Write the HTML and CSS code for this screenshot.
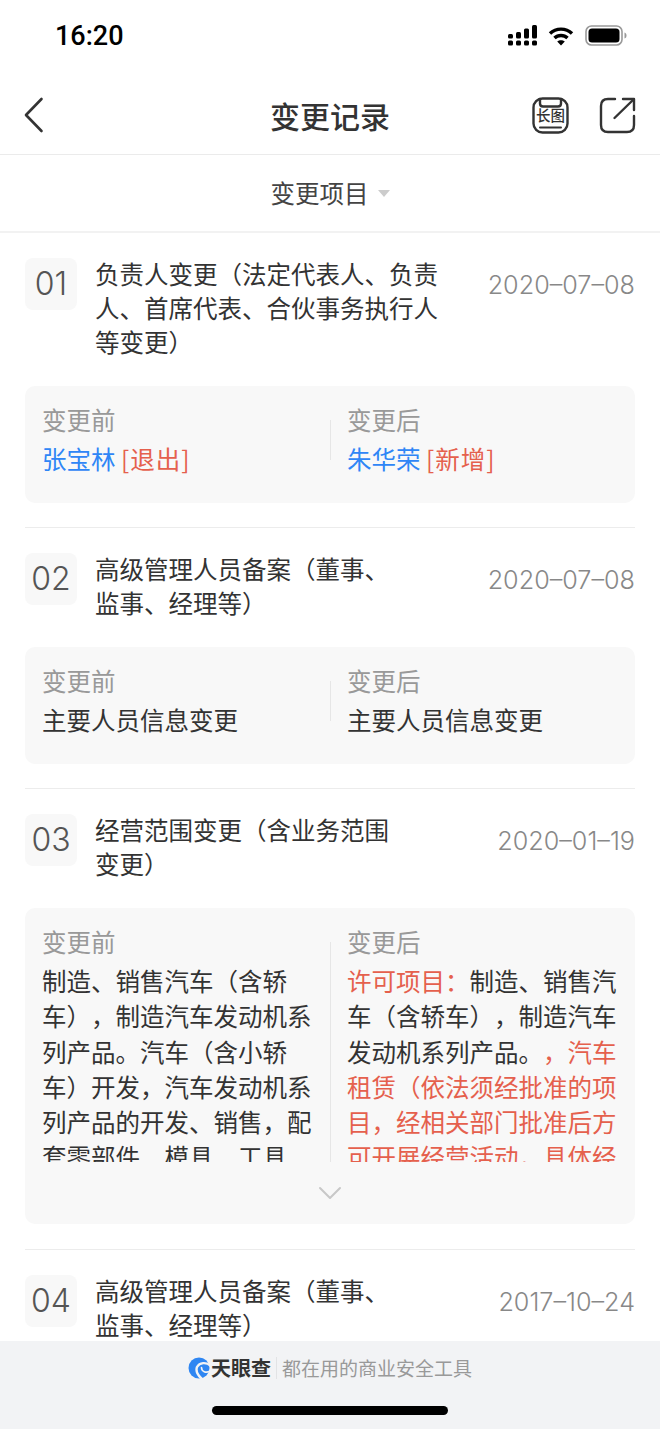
FILE: index.html
```html
<!DOCTYPE html>
<html lang="zh-CN">
<head>
    <meta charset="UTF-8">
    <meta name="viewport" content="width=device-width, initial-scale=1.0">
    <title>变更记录</title>
    <link rel="stylesheet" href="styles.css">
</head>
<body>
    <div class="page">
        <div class="status-bar">
            <span class="time">16:20</span>
            <div class="status-icons">
                <svg class="signal" width="29" height="21" viewBox="0 0 29 21" fill="#000">
                    <rect x="0" y="9" width="5" height="4.5" rx="1.5"/>
                    <rect x="0" y="15.5" width="5" height="5" rx="1.5"/>
                    <rect x="8" y="7" width="5" height="6.5" rx="1.5"/>
                    <rect x="8" y="15.5" width="5" height="5" rx="1.5"/>
                    <rect x="16" y="3.5" width="5" height="10" rx="1.5"/>
                    <rect x="16" y="15.5" width="5" height="5" rx="1.5"/>
                    <rect x="24" y="0" width="5" height="13.5" rx="1.5"/>
                    <rect x="24" y="15.5" width="5" height="5" rx="1.5"/>
                </svg>
                <svg class="wifi" width="26" height="20" viewBox="0 0 26 20" fill="none" stroke="#000" stroke-width="3.4">
                    <path d="M2 7.5C8 1.6 18 1.6 24 7.5"/>
                    <path d="M6.5 12C10 8.6 16 8.6 19.5 12"/>
                    <path d="M13 19.5L9.2 15.6C11.3 13.7 14.7 13.7 16.8 15.6Z" fill="#000" stroke="none"/>
                </svg>
                <svg class="battery" width="42" height="21" viewBox="0 0 42 21">
                    <rect x="1" y="1" width="36" height="19" rx="5.5" fill="none" stroke="#999" stroke-width="1.6"/>
                    <rect x="3.5" y="3.5" width="31" height="14" rx="3.5" fill="#000"/>
                    <path d="M39.5 7.5C41 8 41.5 9 41.5 10.500S41 13 39.5 13.500Z" fill="#999"/>
                </svg>
            </div>
        </div>

        <div class="nav">
            <svg class="back" width="20" height="36" viewBox="0 0 20 36" fill="none" stroke="#333" stroke-width="2.6" stroke-linecap="round" stroke-linejoin="round">
                <path d="M17.500 2L2 18L17.500 34"/>
            </svg>
            <h1 class="nav-title">变更记录</h1>
            <div class="nav-actions">
                <div class="long-icon">
                    <svg width="37" height="37" viewBox="0 0 37 37" fill="none" stroke="#333" stroke-width="2.4" stroke-linecap="round">
                        <rect x="1.500" y="1.500" width="34" height="34" rx="9"/>
                        <path d="M8 2V6.500C8 8.500 9 9.500 11 9.500H26C28 9.500 29 8.500 29 6.500V2"/>
                        <path d="M8 30.500H29" stroke-width="2"/>
                    </svg>
                    <span class="long-text">长图</span>
                </div>
                <svg width="37" height="37" viewBox="0 0 37 37" fill="none" stroke="#333" stroke-width="2.400" stroke-linecap="round" stroke-linejoin="round">
                    <path d="M16 2H9C4.500 2 2 4.500 2 9V28C2 32.500 4.500 35 9 35H28C32.500 35 35 32.500 35 28V19"/>
                    <path d="M15.500 21L34.500 2.500"/>
                    <path d="M24 2H35V13"/>
                </svg>
            </div>
        </div>

        <div class="filter">
            <span>变更项目</span>
            <i class="caret"></i>
        </div>

        <div class="list">
            <div class="item">
                <div class="item-head">
                    <div class="num">01</div>
                    <div class="item-title">负责人变更（法定代表人、负责<br>人、首席代表、合伙事务执行人<br>等变更）</div>
                    <div class="date">2020–07–08</div>
                </div>
                <div class="card">
                    <div class="col">
                        <div class="label">变更前</div>
                        <div class="value"><span class="blue">张宝林</span> <span class="red tag">[退出]</span></div>
                    </div>
                    <div class="col">
                        <div class="label">变更后</div>
                        <div class="value"><span class="blue">朱华荣</span> <span class="red tag">[新增]</span></div>
                    </div>
                </div>
            </div>

            <div class="item">
                <div class="item-head">
                    <div class="num">02</div>
                    <div class="item-title">高级管理人员备案（董事、<br>监事、经理等）</div>
                    <div class="date">2020–07–08</div>
                </div>
                <div class="card">
                    <div class="col">
                        <div class="label">变更前</div>
                        <div class="value">主要人员信息变更</div>
                    </div>
                    <div class="col">
                        <div class="label">变更后</div>
                        <div class="value">主要人员信息变更</div>
                    </div>
                </div>
            </div>

            <div class="item">
                <div class="item-head">
                    <div class="num">03</div>
                    <div class="item-title">经营范围变更（含业务范围<br>变更）</div>
                    <div class="date">2020–01–19</div>
                </div>
                <div class="card card-long">
                    <div class="col">
                        <div class="label">变更前</div>
                        <div class="value">制造、销售汽车（含轿车），制造汽车发动机系列产品。汽车（含小轿车）开发，汽车发动机系列产品的开发、销售，配套零部件、模具、工具</div>
                    </div>
                    <div class="col">
                        <div class="label">变更后</div>
                        <div class="value"><span class="red">许可项目：</span>制造、销售汽车（含轿车），制造汽车发动机系列产品。<span class="red">，汽车租赁（依法须经批准的项目，经相关部门批准后方可开展经营活动，具体经</span></div>
                    </div>
                    <svg class="more" width="24" height="14" viewBox="0 0 24 14" fill="none" stroke="#c8c8c8" stroke-width="2" stroke-linecap="round" stroke-linejoin="round">
                        <path d="M2 2L12 12L22 2"/>
                    </svg>
                </div>
            </div>

            <div class="item">
                <div class="item-head">
                    <div class="num">04</div>
                    <div class="item-title">高级管理人员备案（董事、<br>监事、经理等）</div>
                    <div class="date">2017–10–24</div>
                </div>
            </div>
        </div>

        <div class="footer">
            <div class="brand">
                <svg width="22" height="22" viewBox="0 0 22 22" fill="none" stroke="#f2f3f5" stroke-linecap="round">
                    <circle cx="11" cy="11" r="10.500" fill="#2f86f2" stroke="none"/>
                    <path d="M23 9C18 4.500 11.500 5.500 9 10C7.500 14 9.500 18 14 22" stroke-width="2.400"/>
                    <path d="M22 14C18 16.500 13.500 14.500 13.500 10.500" stroke-width="1.600"/>
                </svg>
                <span class="brand-name">天眼查</span>
                <span class="brand-slogan">都在用的商业安全工具</span>
            </div>
            <div class="home-bar"></div>
        </div>
    </div>
</body>
</html>
```

FILE: styles.css
```css
* {
    box-sizing: border-box;
}
body {
    margin: 0;
    font-family: "Noto Sans CJK SC", sans-serif;
    text-spacing-trim: space-all;
    background-color: #fff;
    color: #333;
}
.page {
    display: flex;
    flex-direction: column;
    width: 660px;
    height: 1429px;
    overflow: hidden;
}
.status-bar {
    display: flex;
    justify-content: space-between;
    align-items: center;
    flex: none;
    height: 70px;
    padding: 1px 33px 0 55px;
}
.time {
    font-family: Roboto, sans-serif;
    font-size: 27px;
    font-weight: 500;
    color: #000;
}
.status-icons {
    display: flex;
    align-items: center;
    gap: 11px;
}
.nav {
    display: flex;
    justify-content: space-between;
    align-items: center;
    position: relative;
    flex: none;
    height: 85px;
    padding: 6px 24px 0 24px;
    border-bottom: 1px solid #ebebeb;
}
.nav-title {
    position: absolute;
    left: 0;
    right: 0;
    margin: 0;
    font-size: 30px;
    font-weight: 500;
    line-height: 40px;
    text-align: center;
    color: #333;
}
.nav-actions {
    display: flex;
    align-items: center;
    gap: 30px;
}
.long-icon {
    position: relative;
    width: 37px;
    height: 37px;
}
.long-text {
    position: absolute;
    left: 4px;
    top: 10px;
    font-size: 14.500px;
    font-weight: 500;
    line-height: 16px;
    white-space: nowrap;
}
.filter {
    display: flex;
    justify-content: center;
    align-items: center;
    gap: 9px;
    flex: none;
    height: 78px;
    padding-bottom: 2px;
    font-size: 24.500px;
    color: #444;
    border-bottom: 2px solid #f2f2f2;
}
.caret {
    width: 0;
    height: 0;
    border-left: 6.500px solid transparent;
    border-right: 6.500px solid transparent;
    border-top: 7px solid #ccc;
    margin-top: 3px;
}
.list {
    flex: 1;
    min-height: 0;
    overflow: hidden;
    padding: 0 25px;
}
.item {
    padding: 25px 0 24px;
    border-bottom: 1px solid #ececec;
}
.item-head {
    display: flex;
    align-items: flex-start;
}
.num {
    flex: none;
    width: 52px;
    height: 52px;
    font-family: Inter, sans-serif;
    font-size: 32px;
    font-weight: 300;
    line-height: 52px;
    text-align: center;
    color: #555;
    background-color: #f8f8f8;
    border-radius: 8px;
}
.item-title {
    flex: 1;
    margin: -1px 0 0 18px;
    font-size: 24.500px;
    line-height: 34px;
    color: #333;
    white-space: nowrap;
}
.date {
    flex: none;
    margin-top: 11px;
    font-family: Inter, sans-serif;
    font-size: 25.200px;
    font-weight: 300;
    line-height: 32px;
    color: #888;
}
.card {
    display: flex;
    align-items: stretch;
    margin-top: 27px;
    padding: 14px 0 25px 17px;
    position: relative;
    background-color: #f8f8f8;
    border-radius: 10px;
    font-size: 24.500px;
    line-height: 39px;
}
.col {
    flex: none;
    width: 288px;
    padding-right: 16px;
}
.col + .col {
    padding: 0 0 0 17px;
    position: relative;
}
.col + .col::before {
    content: "";
    position: absolute;
    left: 0;
    top: 20px;
    bottom: 18px;
    width: 1px;
    background-color: #e6e6e6;
}
.label {
    color: #999;
}
.value {
    color: #333;
}
.blue {
    color: #2f86f6;
}
.red {
    color: #e5604d;
}
.tag {
    letter-spacing: 1px;
}
.card-long {
    height: 316px;
    margin-bottom: 1px;
    align-items: flex-start;
}
.card-long .value {
    height: 199px;
    overflow: hidden;
    line-height: 35.300px;
    margin-top: 2px;
}
.card-long .col + .col::before {
    bottom: 0;
}
.more {
    position: absolute;
    left: 293px;
    bottom: 24px;
}
.footer {
    display: flex;
    flex-direction: column;
    align-items: center;
    flex: none;
    height: 88px;
    padding-top: 16px;
    background-color: #f2f3f5;
}
.brand {
    display: flex;
    align-items: center;
    height: 22px;
}
.brand-name {
    margin-left: 1px;
    padding-right: 5px;
    font-size: 20px;
    font-weight: 700;
    line-height: 22px;
    color: #333;
    border-right: 1px solid #e2e3e5;
}
.brand-slogan {
    margin-left: 5px;
    font-size: 19px;
    line-height: 22px;
    color: #999;
}
.home-bar {
    width: 236px;
    height: 9px;
    margin-top: 27px;
    background-color: #000;
    border-radius: 5px;
}
```
